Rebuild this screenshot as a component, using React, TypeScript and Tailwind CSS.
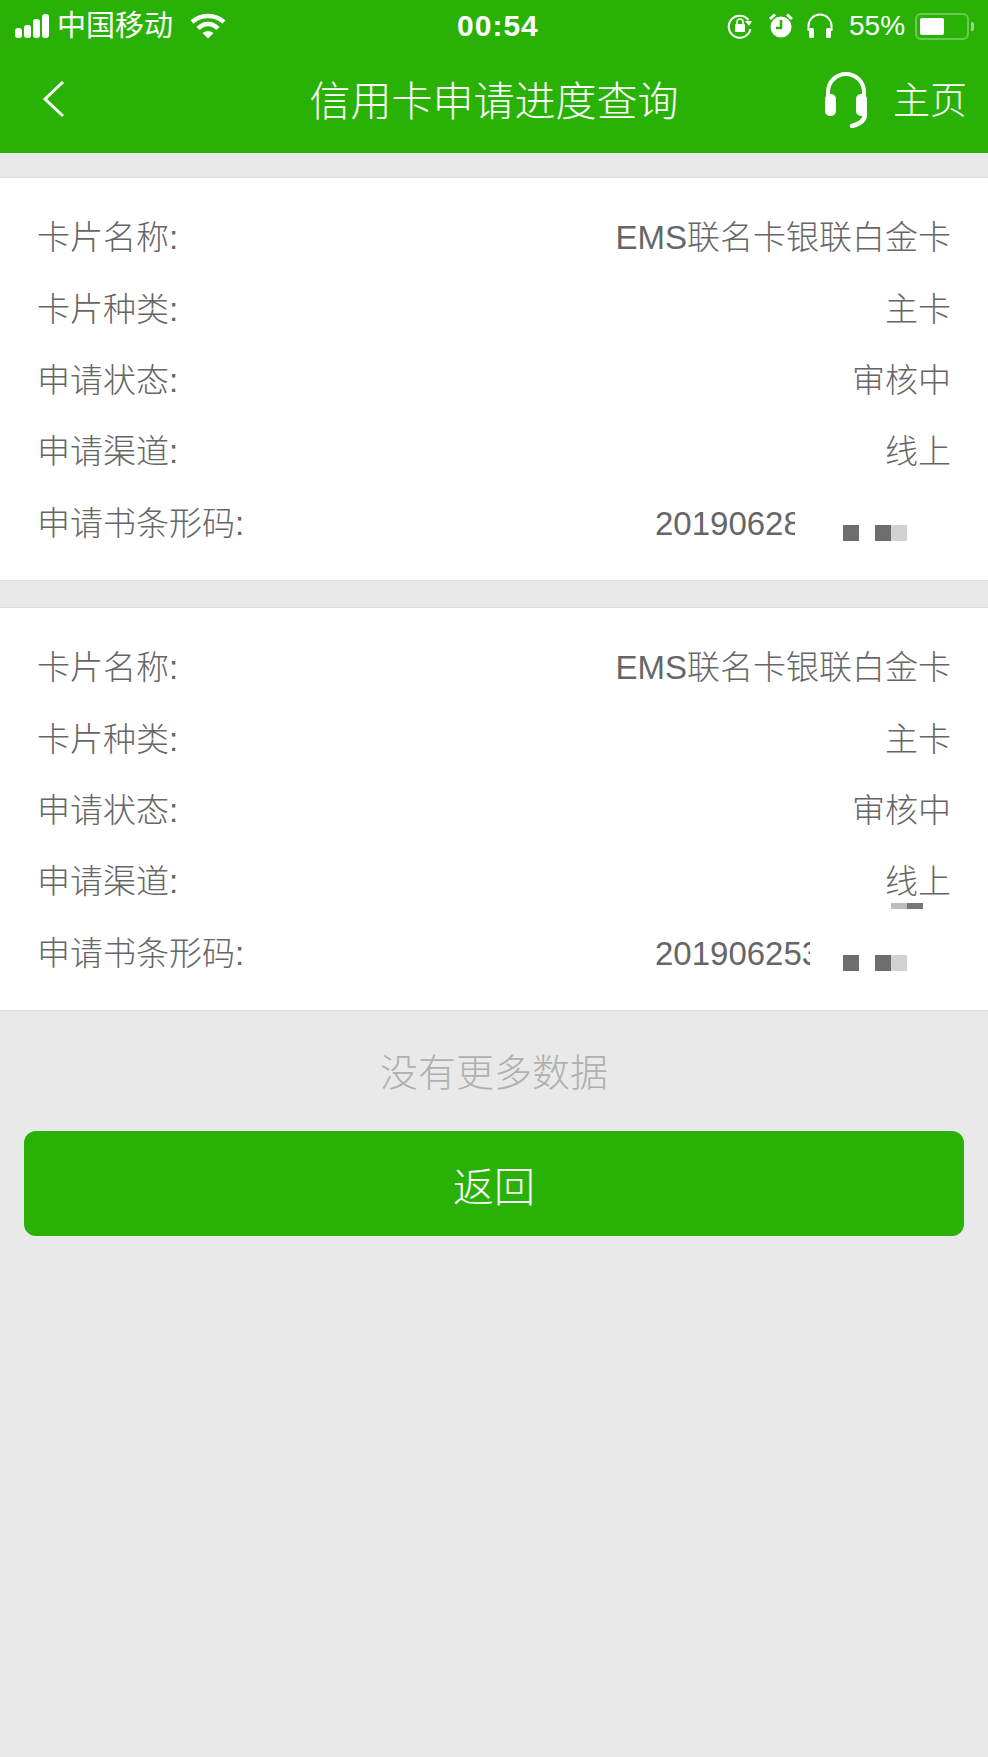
const font = { fontFamily: '"Liberation Sans", "Noto Sans CJK SC", sans-serif' };

function StatusBar() {
  return (
    <div className="flex h-[50px] items-center pt-[2px] text-white">
      {/* signal bars */}
      <div className="ml-[15px] flex items-end gap-[2px]">
        <div className="h-[10px] w-[7px] rounded-[3px] bg-white" />
        <div className="h-[13px] w-[7px] rounded-[3px] bg-white" />
        <div className="h-[19px] w-[7px] rounded-[3px] bg-white" />
        <div className="h-[24px] w-[7px] rounded-[3px] bg-white" />
      </div>
      <span className="ml-[8px] text-[29px] leading-none">中国移动</span>
      <svg className="ml-[17px]" width="36" height="26" viewBox="0 0 36 26" fill="none">
        <path d="M2 9 C11 1 25 1 34 9" stroke="white" strokeWidth="4.500" />
        <path d="M8 15.500 C14 9.500 22 9.500 28 15.500" stroke="white" strokeWidth="4.500" />
        <path d="M12.500 20 C15.500 17.500 20.500 17.500 23.500 20 L18 25.500 Z" fill="white" />
      </svg>
      <span className="ml-[231px] w-[90px] text-[30px] leading-none font-semibold tracking-[1px]">00:54</span>
      <svg className="ml-[180px]" width="26" height="26" viewBox="0 0 26 26" fill="none">
        <path d="M21.500 7 A11 11 0 1 0 23.500 16" stroke="white" strokeWidth="2" />
        <path d="M18 8 L25 8 L22 13 Z" fill="white" />
        <rect x="8" y="11" width="10" height="8" rx="1" fill="white" />
        <path d="M10 11 V9 A3 3 0 0 1 16 9 V11" stroke="white" strokeWidth="1.500" />
      </svg>
      <svg className="ml-[16px]" width="24" height="26" viewBox="0 0 24 26" fill="none">
        <circle cx="12" cy="14" r="10.500" fill="white" />
        <path d="M12 7 V15 H7" stroke="#29b205" strokeWidth="2.500" />
        <path d="M1 6 L6 1.500 M23 6 L18 1.500" stroke="white" strokeWidth="3" />
      </svg>
      <svg className="ml-[13px]" width="28" height="26" viewBox="0 0 28 26" fill="none">
        <path d="M2.500 18 V13 A11.500 11.500 0 0 1 25.500 13 V18" stroke="white" strokeWidth="2" />
        <rect x="3" y="15" width="5" height="10" rx="1.500" fill="white" />
        <rect x="20" y="15" width="5" height="10" rx="1.500" fill="white" />
      </svg>
      <span className="ml-[15px] text-[28px] leading-none">55%</span>
      <div className="ml-[10px] flex items-center">
        <div className="flex h-[27px] w-[54px] items-center rounded-[6px] border-2 border-white/30 px-[3px]">
          <div className="h-[17px] w-[24px] rounded-[2px] bg-white" />
        </div>
        <div className="ml-[2px] h-[9px] w-[3px] rounded-r-[2px] bg-white/50" />
      </div>
    </div>
  );
}

function NavBar() {
  return (
    <div className="relative flex h-[103px] items-center text-white">
      <svg className="ml-[41px] mb-[6px]" width="26" height="38" viewBox="0 0 26 38" fill="none">
        <path d="M22 2 L4 19 L22 36" stroke="white" strokeWidth="3" />
      </svg>
      <span className="ml-[242px] w-[370px] pt-[2px] text-center text-[41px] leading-none font-light">信用卡申请进度查询</span>
      <svg className="ml-[145px] mb-[6px]" width="44" height="58" viewBox="0 0 44 58" fill="none">
        <path d="M4 32 V22 A18 18 0 0 1 40 22 V32" stroke="white" strokeWidth="4" />
        <rect x="1" y="24" width="11" height="22" rx="5" fill="white" />
        <rect x="32" y="24" width="11" height="22" rx="5" fill="white" />
        <path d="M41 44 C41 50 36 54 28 56" stroke="white" strokeWidth="4.500" strokeLinecap="round" />
      </svg>
      <span className="ml-[25px] text-[37px] leading-none font-light">主页</span>
    </div>
  );
}

function Row({ label, value }: { label: string; value: string }) {
  return (
    <div className="flex h-[71.4px] items-center justify-between">
      <span>{label}</span>
      <span>{value}</span>
    </div>
  );
}

function BarcodeRow({ value, width, gap }: { value: string; width: string; gap: string }) {
  return (
    <div className="flex h-[71.4px] items-center">
      <span>申请书条形码:</span>
      <span className={`ml-auto overflow-hidden whitespace-nowrap ${width}`}>{value}</span>
      <div className={`mt-[19px] mr-[44px] flex ${gap}`}>
        <div className="h-[16px] w-[16px] bg-[#6e6e6e]" />
        <div className="ml-[16px] h-[16px] w-[16px] bg-[#6e6e6e]" />
        <div className="h-[16px] w-[16px] bg-[#d2d2d2]" />
      </div>
    </div>
  );
}

function Card({ barcode, width, gap, mark }: { barcode: string; width: string; gap: string; mark?: boolean }) {
  return (
    <div className="relative border-y border-[#dedede] bg-white px-[37px] pt-[24px] pb-[21px] text-[33px] leading-none font-light text-[#666666]">
      <Row label="卡片名称:" value="EMS联名卡银联白金卡" />
      <Row label="卡片种类:" value="主卡" />
      <Row label="申请状态:" value="审核中" />
      <Row label="申请渠道:" value="线上" />
      <BarcodeRow value={barcode} width={width} gap={gap} />
      {mark && (
        <div className="absolute top-[295px] left-[891px] flex h-[6px]">
          <div className="w-[16px] bg-[#bdbdbd]" />
          <div className="w-[16px] bg-[#777777]" />
        </div>
      )}
    </div>
  );
}

export default function App() {
  return (
    <div className="flex min-h-[1757px] w-[988px] flex-col bg-[#e9e9e9]" style={font}>
      <div className="bg-[#29b205]">
        <StatusBar />
        <NavBar />
      </div>
      <div className="mt-[24px] flex flex-col gap-[26px]">
        <Card barcode="201906288" width="w-[140px]" gap="ml-[48px]" />
        <Card barcode="201906253" width="w-[155px]" gap="ml-[33px]" mark />
      </div>
      <div className="flex h-[120px] items-center justify-center pt-[4px] text-[38px] leading-none font-light text-[#b0b0b0]">没有更多数据</div>
      <button className="mx-[24px] h-[105px] rounded-[12px] bg-[#29b205] pt-[10px] text-[41px] leading-none font-light text-white">返回</button>
    </div>
  );
}
